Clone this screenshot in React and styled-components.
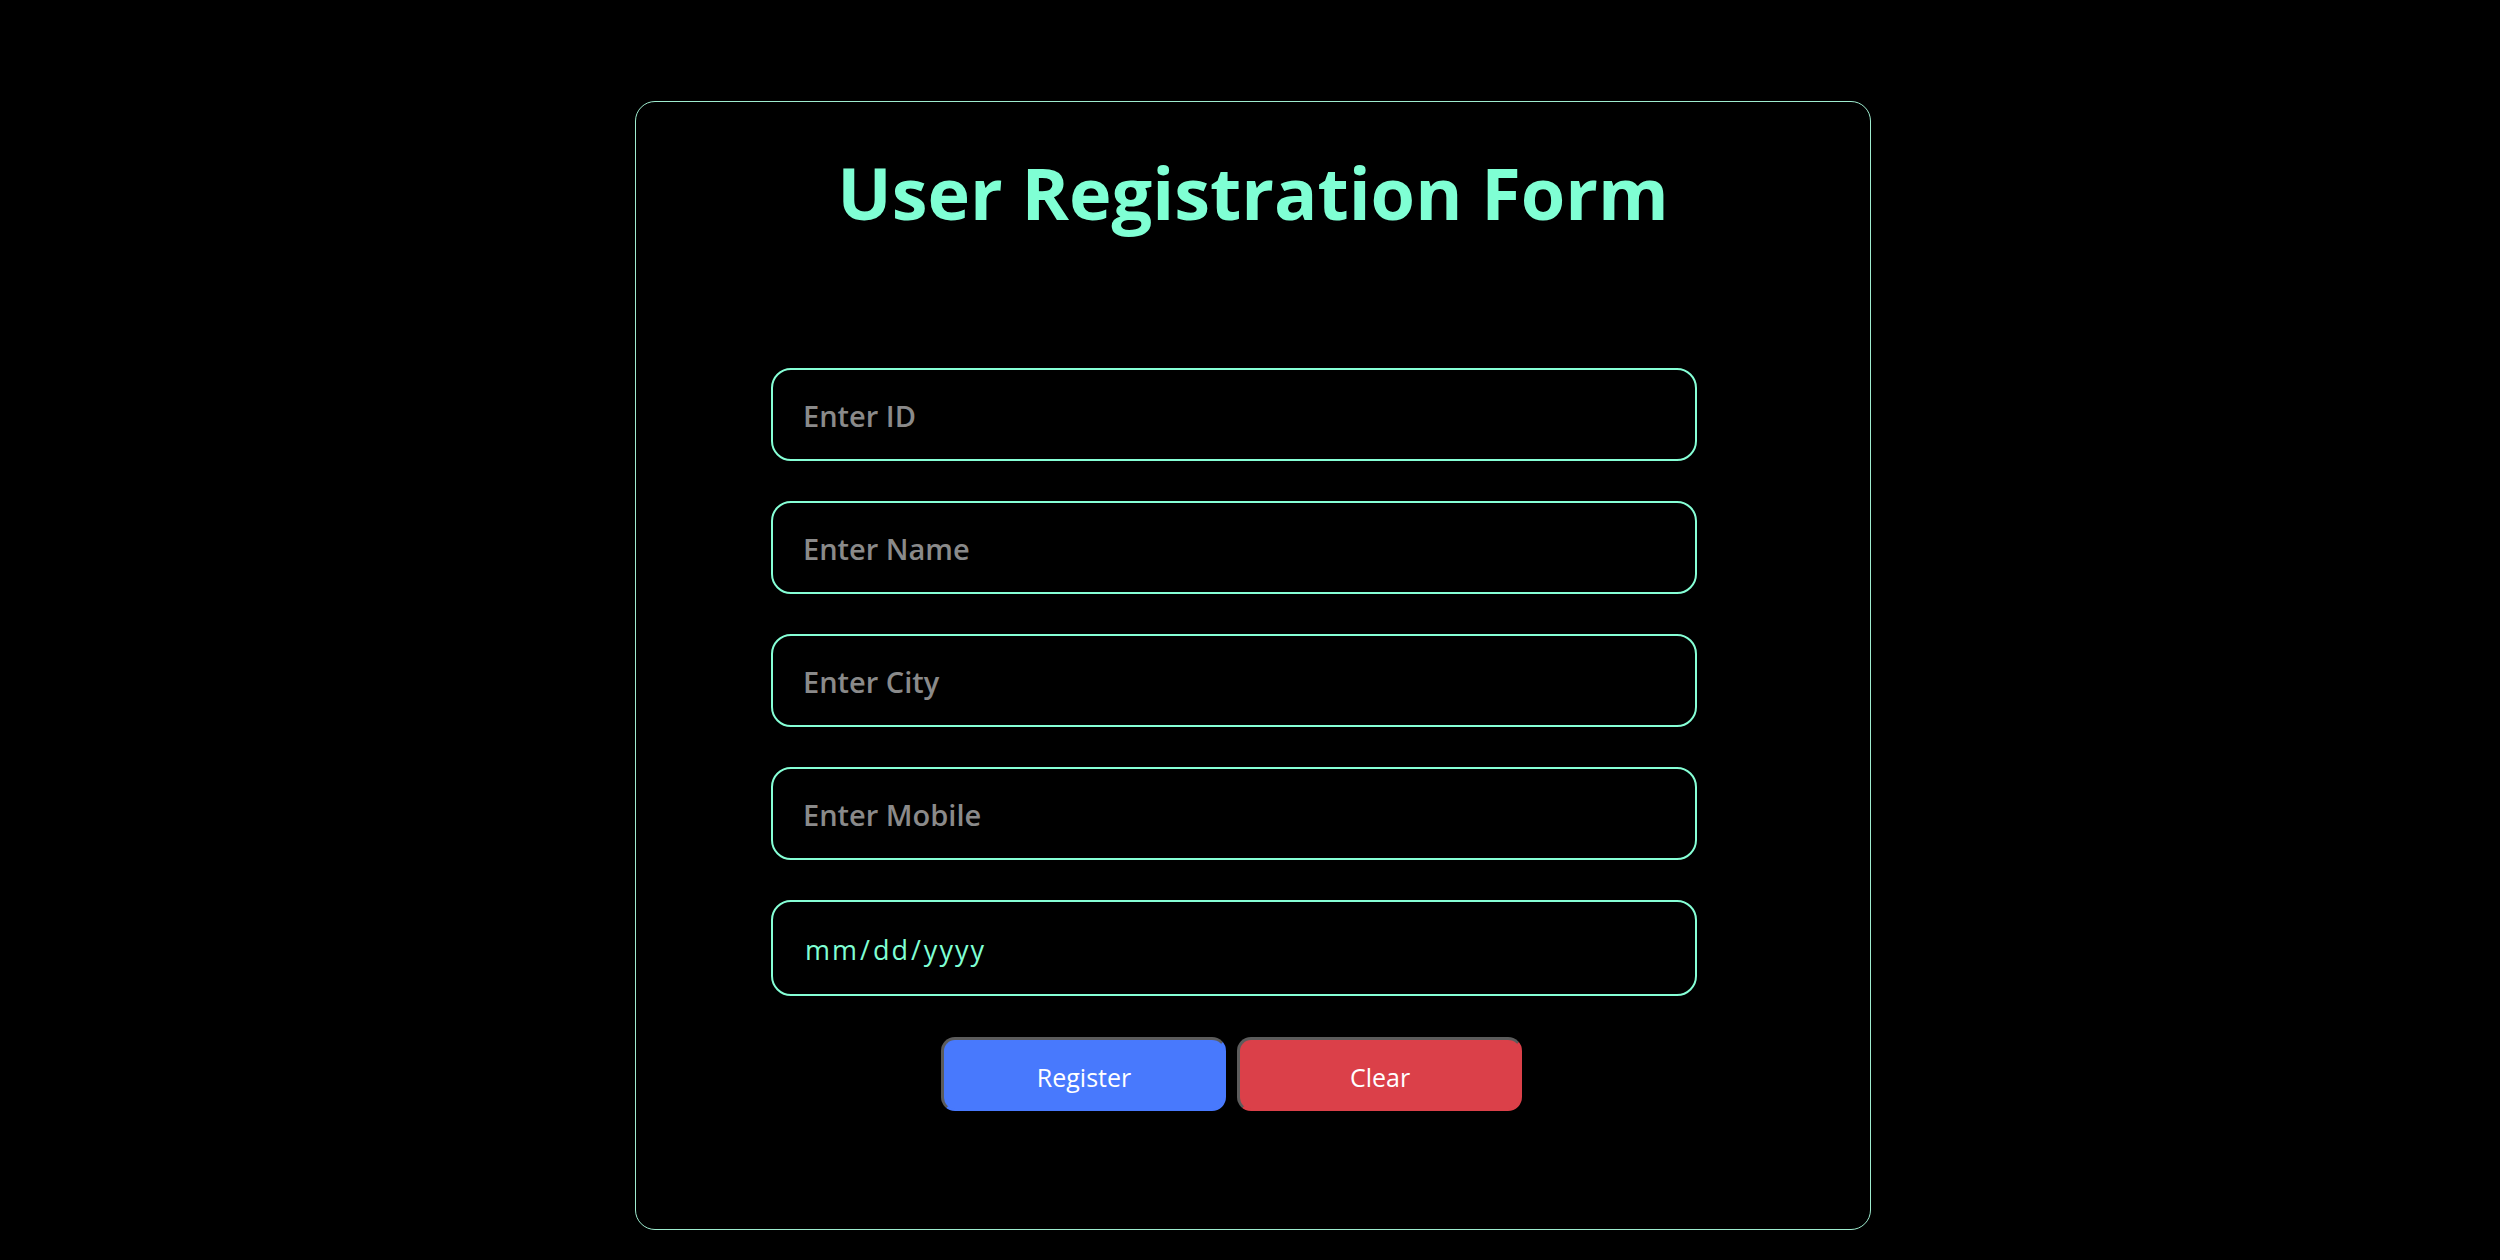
import React from 'react';
import styled, { createGlobalStyle } from 'styled-components';

const GlobalStyle = createGlobalStyle`
	html, body {
		margin: 0;
		padding: 0;
		background: #000;
	}
	body {
		font-family: 'Open Sans', 'Noto Sans', sans-serif;
	}
`;

const Page = styled.div`
	min-height: 1260px;
	padding: 101px 0 0 6px;
	box-sizing: border-box;
	background: #000;
`;

const Card = styled.div`
	width: 1236px;
	margin: 0 auto;
	box-sizing: border-box;
	border: 1px solid #9eeccf;
	border-radius: 20px;
	padding: 40px 0 118px;
`;

const Title = styled.h1`
	margin: 0;
	text-align: center;
	font-size: 72px;
	line-height: 100px;
	font-weight: 700;
	color: #7fffd4;
`;

const Form = styled.form`
	display: flex;
	flex-direction: column;
	gap: 40px;
	margin-top: 126px;
	padding-left: 135px;
`;

const Field = styled.input`
	width: 926px;
	height: ${(p) => (p.type === 'date' ? '96px' : '93px')};
	box-sizing: border-box;
	border: 2px solid #86ffd6;
	border-radius: 20px;
	background: #000;
	padding: 2px 31px 0 ${(p) => (p.type === 'date' ? '31px' : '30px')};
	font-family: 'Open Sans', sans-serif;
	font-size: ${(p) => (p.type === 'date' ? '27px' : '29px')};
	font-weight: ${(p) => (p.type === 'date' ? 400 : 600)};
	letter-spacing: ${(p) => (p.type === 'date' ? '2px' : '0')};
	color: #7fffd4;
	outline: none;
	&::placeholder {
		color: #8a8a8a;
	}
	&::-webkit-calendar-picker-indicator {
		opacity: 0;
	}
`;

const Actions = styled.div`
	display: flex;
	gap: 11px;
	margin-top: 1px;
	padding-left: 170px;
`;

const Button = styled.button`
	width: 285px;
	height: 74px;
	box-sizing: border-box;
	border-radius: 14px;
	border-width: 3px 2px 2px 3px;
	border-style: solid;
	border-color: #5c5c5c ${(p) => p.bg} ${(p) => p.bg} #5c5c5c;
	background: ${(p) => p.bg};
	color: #fff;
	font-family: 'Open Sans', sans-serif;
	font-size: 25px;
	padding: 4px 0 0;
	cursor: pointer;
`;

export default function App() {
	return (
		<Page>
			<GlobalStyle />
			<Card>
				<Title>User Registration Form</Title>
				<Form onSubmit={(e) => e.preventDefault()}>
					<Field type='text' placeholder='Enter ID' />
					<Field type='text' placeholder='Enter Name' />
					<Field type='text' placeholder='Enter City' />
					<Field type='text' placeholder='Enter Mobile' />
					<Field type='date' />
					<Actions>
						<Button type='submit' bg='#4879fd'>
							Register
						</Button>
						<Button type='button' bg='#db4049'>
							Clear
						</Button>
					</Actions>
				</Form>
			</Card>
		</Page>
	);
}
